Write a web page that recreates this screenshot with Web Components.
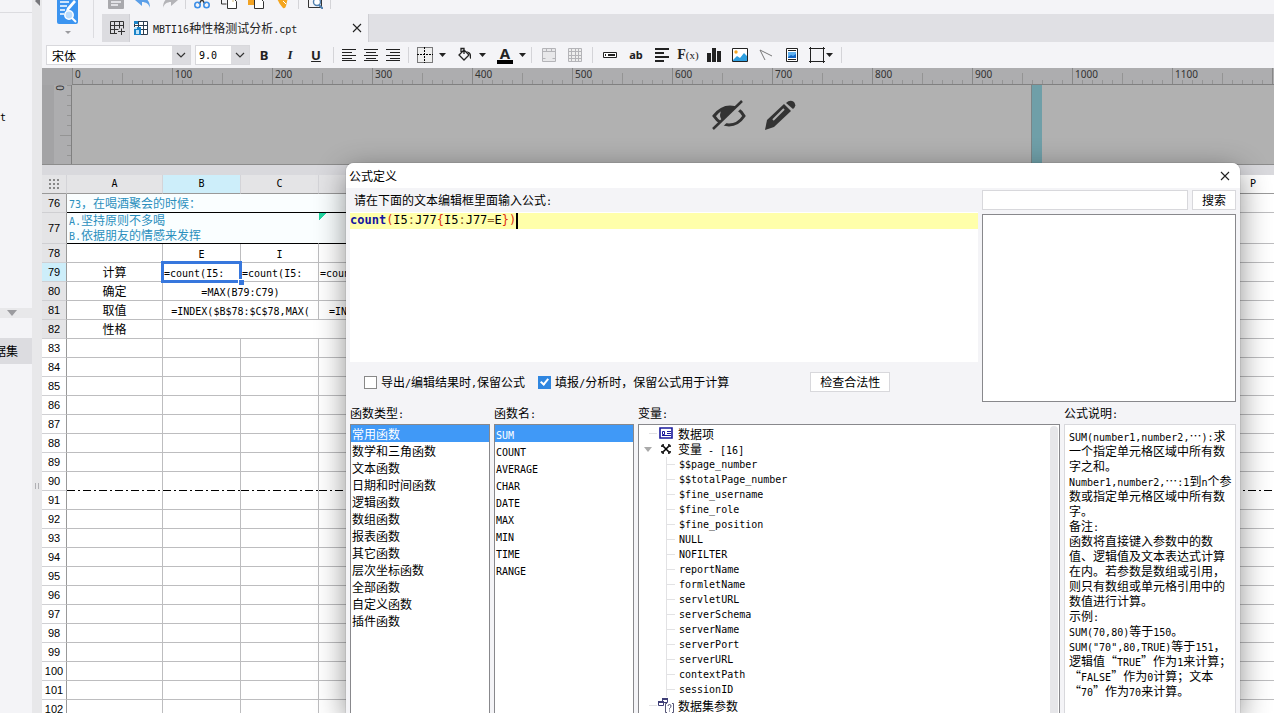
<!DOCTYPE html>
<html lang="zh-CN">
<head>
<meta charset="utf-8">
<title>MBTI16种性格测试分析.cpt</title>
<style>
  body {
    background: #e8e8ea;
    color: #000;
    display: grid;
    font: 12px/15px "Noto Sans CJK SC", "Liberation Sans", sans-serif;
    grid-template-columns: 32px 10px minmax(0, 1fr);
    height: 100vh;
    margin: 0;
    overflow: hidden;
    position: relative;
  }

  main {
    display: flex;
    flex-direction: column;
    min-width: 0;
    overflow: hidden;
  }
</style>
</head>
<body>
  <side-panel></side-panel>
  <pane-splitter></pane-splitter>
  <main>
    <app-header></app-header>
    <format-bar></format-bar>
    <design-canvas></design-canvas>
    <report-sheet></report-sheet>
  </main>
  <formula-dialog heading="公式定义">
    <func-list slot="types" label="函数类型:" items="常用函数|数学和三角函数|文本函数|日期和时间函数|逻辑函数|数组函数|报表函数|其它函数|层次坐标函数|全部函数|自定义函数|插件函数"></func-list>
    <func-list slot="names" label="函数名:" items="SUM|COUNT|AVERAGE|CHAR|DATE|MAX|MIN|TIME|RANGE"></func-list>
    <param-tree slot="params"></param-tree>
    <func-help slot="help"></func-help>
  </formula-dialog>

<script>
// rules every shadow root needs
const base = `
  *, *::before, *::after { box-sizing: border-box; }
  :host([hidden]) { display: none; }
  .l { font-family: "DejaVu Sans Mono", monospace; font-size: 10px; line-height: 12px; }
  button, input, select, textarea { border-radius: 0; color: inherit; font: inherit; margin: 0; padding: 0; }
  svg { display: block; }
`;

// half width runs get the narrow mono face
function mix(str) {
  return str.replace(/[\x20-\x7e]+/g, m => {
    const safe = m.replace(/&/g, '&amp;').replace(/</g, '&lt;');
    return `<span class="l">${safe}</span>`;
  });
}

function render(elem, html) {
  elem.attachShadow({ mode: 'open' }).innerHTML = html;
}

const icons = {
  save: [16, 16, '<path d="M1 0h14q1 0 1 1v14q0 1-1 1H1q-1 0-1-1V0z" fill="#a9a9ad"/><path d="M3 9h10M3 12h7" stroke="#f4f4f7" stroke-width="1.5"/>'],
  undo: [16, 16, '<path d="M0 7l7-6v4c5 0 8 3 8 10-1-4-4-6-8-6v4z" fill="#5b9fe8"/>'],
  redo: [16, 16, '<path d="M16 7L9 1v4c-5 0-8 3-8 10 1-4 4-6 8-6v4z" fill="#b4b4b8"/>'],
  cut: [16, 16, '<path d="M4 0l7 11M12 0L5 11" stroke="#333" stroke-width="1.4"/><circle cx="3.5" cy="12" r="2.7" fill="none" stroke="#3d8fe8" stroke-width="1.6"/><circle cx="12.5" cy="12" r="2.7" fill="none" stroke="#3d8fe8" stroke-width="1.6"/>'],
  copy: [16, 16, '<path d="M.5 0v11h5M0 0h10v4" fill="none" stroke="#333"/><path d="M6.500 5.500h6l3 3v7h-9z" fill="#fff" stroke="#333"/><path d="M7 6h5v3" fill="none" stroke="#d3bd82"/>'],
  paste: [16, 16, '<path d="M0 0h12v12H0z" fill="#f2a324"/><path d="M6.500 5.500h6l3 3v7h-9z" fill="#fff" stroke="#333"/>'],
  brush: [16, 16, '<path d="M1 0h13l-3 13q-1 3-3 2Q2 9 1 0z" fill="#f4a51e"/><path d="M8 8l3 3" stroke="#fff"/>'],
  preview: [16, 16, '<path d="M1.500 0v14.500h13V0M4.500 0v6" fill="none" stroke="#333"/><circle cx="10" cy="9" r="3.500" fill="#fff" stroke="#4f7fae" stroke-width="1.400"/><path d="M12 12l4 4" stroke="#4f7fae" stroke-width="2"/>'],
  tpl: [21, 24, '<path d="M0 0h21v22q0 2-2 2H2q-2 0-2-2z" fill="#3b94f0"/><path d="M3 2h9M3 6h7M3 10h5M3 14h4" stroke="#fff" stroke-width="1.600"/><path d="M17 0l-7 8-1 3 3-1 7-8z" fill="#fff"/><circle cx="12" cy="15" r="4.200" fill="#bcdcfb" stroke="#fff" stroke-width="1.500"/><path d="M15 18l4 4" stroke="#fff" stroke-width="2"/>'],
  newTab: [15, 14, '<path d="M.5 12.500V.5h13v7M.5 4.500h13M4.500.5v12M9.500.5v7M.5 8.500h8M0 12.500h7M11.500 7.500v6.500M8 10.500h7" fill="none" stroke="#333"/>'],
  sheet: [14, 14, '<path d="M.5.5h13v13H.5zM.5 4.500h13M4.500.5v13M9.500.5v13M.5 8.500h13" fill="#fff" stroke="#2d3e50"/><path d="M0 0h4v3H0zM0 6h7v8H0z" fill="#1b84c8"/><path d="M0 6h3v2H0zM2 9h3v4H2z" fill="#bfe3f8"/>'],
  close: [10, 10, '<path d="M1 1l8 8M9 1L1 9" stroke="#222" stroke-width="1.100"/>'],
  left: [14, 12, '<path d="M0 .5h14M0 3.500h10M0 6.500h14M0 9.500h10M0 11.500h14" stroke="#222"/>'],
  center: [14, 12, '<path d="M0 .5h14M2 3.500h10M0 6.500h14M2 9.500h10M0 11.500h14" stroke="#222"/>'],
  right: [14, 12, '<path d="M0 .5h14M4 3.500h10M0 6.500h14M4 9.500h10M0 11.500h14" stroke="#222"/>'],
  border: [16, 16, '<path d="M.5.5h15v15H.5z" fill="#eee" stroke="#000" stroke-dasharray="1 1"/><path d="M0 7.500h16M7.500 0v16" stroke="#000" stroke-dasharray="2 1"/>'],
  bucket: [16, 16, '<path d="M4 5V1.500h3V7M7 3l5 5-5 5-5-5z" fill="none" stroke="#222" stroke-width="1.300"/><path d="M9 4q5 1 5 4v4q-2-1-1-4z" fill="#222"/>'],
  merge: [14, 14, '<path d="M.5.5h13v13H.5z" fill="#e8e8ea" stroke="#b4b4b8"/><path d="M.5 3.500h13M4.500.5v3M9.500.5v3M.5 10.500h3M10.500 10.500h3" stroke="#b4b4b8"/>'],
  grid: [14, 14, '<path d="M.5.5h13v13H.5zM.5 3.500h13M.5 7.500h13M.5 10.500h13M3.500.5v13M7.500.5v13M10.500.5v13" fill="#eee" stroke="#b4b4b8"/>'],
  field: [14, 6, '<path d="M.5.5h13v5H.5z" fill="#fff" stroke="#222"/><path d="M2.500 2v2M5 2.500h7M5 3.500h7" stroke="#222"/>'],
  text: [14, 14, '<path d="M0 1h14M0 5h9M0 9h14M0 13h9" stroke="#222" stroke-width="2"/>'],
  chart: [14, 14, '<path d="M0 5h4v9H0zM5 0h4v14H5zM10 3h4v11h-4z" fill="#222"/>'],
  picture: [16, 14, '<path d="M.5.5h15v13H.5z" fill="#fff" stroke="#222"/><circle cx="4" cy="4" r="1.700" fill="#f5a623"/><path d="M1 12l4-4 3 2 4-5 3 3v5H1z" fill="#2e9fe0"/>'],
  line: [14, 12, '<path d="M1 1l5 10M1 1l12 6" fill="none" stroke="#777"/>'],
  doc: [12, 14, '<path d="M.5.5h11v13H.5z" fill="#fff" stroke="#222"/><path d="M2 2.500h8M2 11.500h8" stroke="#222"/><path d="M2 4h8v6H2z" fill="#5fb1f0"/><path d="M2 9l3-2 2 1 3-2v4H2z" fill="#1266c4"/>'],
  frame: [16, 16, '<path d="M1.500 0v16M14.500 0v16M0 1.500h16M0 14.500h16" fill="none" stroke="#222"/>'],
  caret: [8, 5, '<path d="M0 0h7L3.500 4z" fill="#222"/>'],
  small: [6, 4, '<path d="M0 0h6L3 3z" fill="#9b9b9f"/>'],
  grey: [10, 6, '<path d="M0 0h10L5 6z" fill="#9b9b9f"/>'],
  chevron: [10, 6, '<path d="M1 1l4 4 4-4" fill="none" stroke="#333" stroke-width="1.200"/>'],
  dots: [10, 10, '<path d="M0 1h2M4 1h2M8 1h2M0 5h2M4 5h2M8 5h2M0 9h2M4 9h2M8 9h2" stroke="#888" stroke-width="2"/>'],
  eye: [34, 30, '<path d="M2 16Q9 7 18 7T32 16Q26 25 17 25T2 16z" fill="none" stroke="#333" stroke-width="3"/><path d="M8 15q0-8 9-9 6 0 8 3L13 21q-5-1-5-6z" fill="#333"/><path d="M4 30L33 1" stroke="#b1b1b1" stroke-width="5"/><path d="M1 29L30 1" stroke="#333" stroke-width="2.500"/>'],
  pencil: [32, 30, '<path d="M1 30l2-10L20 4l7 7L10 27z" fill="#333"/><path d="M9 20L20 9" stroke="#b1b1b1" stroke-width="2"/><path d="M22 3q4-4 8-1 3 4-1 7z" fill="#333"/>'],
  data: [14, 12, '<path d="M1 1h12v10H1z" fill="#fff" stroke="#1a1a9c" stroke-width="1.600"/><path d="M3.500 4.500h2v3h-2zM8 4.500h4M8 6.500h4M3 8.500h9" fill="none" stroke="#1a1a9c"/>'],
  vars: [12, 12, '<path d="M2 2l8 8M10 2l-8 8" stroke="#000" stroke-width="1.600"/><path d="M1 4q0-3 3-3v3zM11 4q0-3-3-3v3zM1 8q0 3 3 3V8zM11 8q0 3-3 3V8z" fill="#222"/>'],
  params: [17, 16, '<path d="M4.500 1.500h5v4h-5zM.5 4.500h5v4h-5z" fill="#fff" stroke="#3f3f77"/><path d="M4 2h6M0 5h6" stroke="#3f3f77" stroke-width="2"/><path d="M9 6.500H7.500v9H9M14 6.500h1.500v9H14M10 9q0-1.500 1.500-1.500T13 9t-1.500 2.500v1M11.500 13.500v1" fill="none" stroke="#555577"/>']
};

function icon(name) {
  const [w, h, body] = icons[name];
  return `<svg width="${w}" height="${h}" viewBox="0 0 ${w} ${h}" aria-hidden="true">${body}</svg>`;
}

class SidePanel extends HTMLElement {
  constructor() {
    super();
    render(this, `
    <style>
      ${base}
      :host { background: #f4f4f7; display: flex; flex-direction: column; overflow: hidden; }
      .head { border-bottom: 1px solid #dcdce0; height: 13px; }
      .tree { height: 295px; padding-top: 95px; }
      .fold { align-items: center; background: #e8e8ea; display: flex; height: 10px; padding-left: 7px; }
      .fold button { background: none; border: 0; }
      .set { background: #dcdce0; line-height: 26px; margin-top: 20px; overflow: hidden; display: flex; justify-content: flex-end; padding-right: 14px; white-space: nowrap; }
    </style>
    <div class="head"></div>
    <div class="tree"><span class="l">t</span></div>
    <div class="fold"><button aria-label="折叠">${icon('grey')}</button></div>
    <div class="set">据集</div>`);
  }
}

class PaneSplitter extends HTMLElement {
  constructor() {
    super();
    render(this, `
    <style>
      ${base}
      :host { align-items: center; background: #e8e8ea; display: flex; flex-direction: column; justify-content: space-between; }
      i { border: 5px solid transparent; border-left-width: 0; border-right-color: #77777b; margin-top: -4px; }
      b { border: solid #b0b0b4; border-width: 0 1px; height: 6px; width: 4px; margin-bottom: 224px; }
    </style>
    <i></i><b></b>`);
  }
}

class AppHeader extends HTMLElement {
  constructor() {
    super();
    const btn = (n, label) => `<button aria-label="${label}">${icon(n)}</button>`;
    render(this, `
    <style>
      ${base}
      :host { background: #f4f4f7; display: grid; flex: none; grid-template-columns: 51px 9px minmax(0, 1fr); height: 42px; }
      button { background: none; border: 0; display: grid; place-items: center; }
      .tpl { align-content: start; justify-items: center; gap: 7px; }
      .rule { border-left: 1px solid #dcdce0; height: 38px; }
      .right { display: grid; grid-template-rows: 14px 28px; }
      .tools { align-items: flex-end; display: flex; padding-bottom: 5px; overflow: hidden; }
      .tools button { width: 27px; flex: none; }
      .tools i { border-left: 1px solid #d4d4d8; height: 9px; margin: 0 2px; }
      .tabs { background: #e0e0e4; display: flex; }
      .add { background: #dcdce0; width: 27px; padding-left: 4px; }
      .tab { align-items: center; background: #f4f4f7; border: solid #cfcfd4; border-width: 0 1px; display: flex; gap: 5px; padding: 0 6px 0 4px; width: 240px; }
      .tab span.name { flex: 1; white-space: nowrap; color: #222; }
    </style>
    <button class="tpl" aria-label="模板">${icon('tpl')}${icon('small')}</button>
    <div class="rule"></div>
    <div class="right">
      <div class="tools">
        ${btn('save', '保存')}${btn('undo', '撤销')}${btn('redo', '重做')}<i></i>
        ${btn('cut', '剪切')}${btn('copy', '复制')}${btn('paste', '粘贴')}${btn('brush', '格式刷')}<i></i>
        ${btn('preview', '预览')}<i></i>
      </div>
      <div class="tabs">
        <button class="add" aria-label="新建">${icon('newTab')}</button>
        <div class="tab">${icon('sheet')}<span class="name">${mix('MBTI16种性格测试分析.cpt')}</span>${btn('close', '关闭')}</div>
      </div>
    </div>`);
  }
}

class FormatBar extends HTMLElement {
  constructor() {
    super();
    const btn = (body, label, cls = '') => `<button class="${cls}" aria-label="${label}">${body}</button>`;
    const drop = (body, label) => btn(body + icon('caret'), label, 'drop');
    render(this, `
    <style>
      ${base}
      :host { align-items: center; background: #f4f4f7; display: flex; flex: none; height: 26px; padding-left: 4px; }
      .combo { border: 1px solid #d8d8dc; display: grid; grid-template-columns: minmax(0, 1fr) 18px; height: 20px; margin-right: 4px; width: 145px; }
      .combo.small { margin-right: 1px; width: 55px; }
      .combo select { appearance: none; background: linear-gradient(to left, #dcdce0 18px, #fff 18px); border: 0; grid-area: 1 / 1 / 2 / 3; padding-left: 5px; outline: 0; }
      .combo.small select { font-family: "DejaVu Sans Mono", monospace; font-size: 10px; padding-left: 3px; }
      .combo svg { align-self: center; grid-area: 1 / 2; justify-self: center; pointer-events: none; }
      button { background: none; border: 0; display: flex; align-items: center; justify-content: center; flex: none; width: 26px; height: 22px; color: #222; }
      .al { width: 22px; }
      .drop { gap: 6px; width: 34px; padding-left: 4px; margin-right: 6px; }
      .drop.last { margin-right: 0; }
      .frame { gap: 1px; width: 32px; }
      .txt { font: bold 13px/16px "Noto Sans", sans-serif; }
      .it { font: italic bold 13px/16px "Liberation Serif", serif; }
      .un { text-decoration: underline; }
      .ab { font-size: 11px; }
      .fx { font: bold 14px/16px "Liberation Serif", serif; }
      .fx small { font-size: 11px; font-weight: normal; }
      .color { border-bottom: 4px solid #000; font: bold 15px/13px "Noto Sans", sans-serif; width: 16px; }
      i { border-left: 1px solid #d4d4d8; height: 16px; margin: 0 4px; }
    </style>
    <label class="combo"><select aria-label="字体"><option>宋体</option></select>${icon('chevron')}</label>
    <label class="combo small"><select aria-label="字号"><option>9.0</option></select>${icon('chevron')}</label>
    ${btn('B', '加粗', 'txt')}${btn('I', '斜体', 'it')}${btn('U', '下划线', 'txt un')}<i></i>
    ${btn(icon('left'), '左对齐', 'al')}${btn(icon('center'), '居中', 'al')}${btn(icon('right'), '右对齐', 'al')}<i></i>
    ${drop(icon('border'), '边框')}${drop(icon('bucket'), '填充')}${btn('<span class="color">A</span>' + icon('caret'), '字体颜色', 'drop last')}<i></i>
    ${btn(icon('merge'), '合并')}${btn(icon('grid'), '拆分')}<i></i>
    ${btn(icon('field'), '数据列')}${btn('ab', '文本', 'txt ab')}${btn(icon('text'), '富文本')}
    ${btn('<span>F<small>(x)</small></span>', '公式', 'fx')}${btn(icon('chart'), '图表')}${btn(icon('picture'), '图片')}
    ${btn(icon('line'), '斜线')}${btn(icon('doc'), '子报表')}${btn(icon('frame') + icon('caret'), '悬浮元素', 'frame')}<i></i>`);
  }
}

class DesignCanvas extends HTMLElement {
  constructor() {
    super();
    let marks = '';
    for (let i = 0; i < 12; i++) marks += `<span>${i * 100}</span>`;
    render(this, `
    <style>
      ${base}
      :host { background: #a6a6a8; display: grid; flex: none; grid-template: 17px 79px / 30px minmax(0, 1fr); border-bottom: 1px solid #8c8c8c; }
      .top { background: #adadaf; border-bottom: 1px solid #808080; display: flex; grid-column: 2; overflow: hidden; }
      .top span {
        background:
          linear-gradient(#888, #888) 0 0 / 1px 17px no-repeat,
          linear-gradient(#949494, #949494) 50px 5px / 1px 12px no-repeat,
          linear-gradient(90deg, #949494 1px, transparent 1px) 0 12px / 10px 5px repeat-x;
        color: #333; flex: none; font: 10px/13px "Noto Sans", sans-serif; padding-left: 3px; width: 100px;
      }
      .side {
        background:
          linear-gradient(#949494, #949494) 18px 50px / 12px 1px no-repeat,
          linear-gradient(#949494 1px, transparent 1px) 25px 0 / 5px 10px repeat-y,
          linear-gradient(90deg, #a3a3a5 12px, #adadaf 12px);
        border-right: 1px solid #808080; color: #333;
        font: 10px/12px "Noto Sans", sans-serif; padding-left: 12px; writing-mode: vertical-rl; display: flex; align-items: flex-end;
      }
      .page { background: #b1b1b1; display: grid; grid-template-columns: minmax(0, 1fr) 11px 232px; }
      .icons { align-items: flex-start; display: flex; gap: 18px; padding: 15px 0 0 640px; }
      .icons button { background: none; border: 0; }
      .band { background: #6f9fa8; border-left: 1px solid #7b8587; }
    </style>
    <div></div>
    <div class="top">${marks}<span></span></div>
    <div class="side">0</div>
    <div class="page">
      <div class="icons"><button aria-label="隐藏">${icon('eye')}</button><button aria-label="编辑">${icon('pencil')}</button></div>
      <div class="band"></div>
    </div>`);
  }
}

class ReportSheet extends HTMLElement {
  constructor() {
    super();
    const blank = n => '<td></td>'.repeat(n);
    let rows = '';
    for (let i = 83; i <= 102; i++) {
      rows += `<tr class="${i === 90 ? 'page' : ''}"><th class="free">${i}</th>${blank(14)}</tr>`;
    }
    render(this, `
    <style>
      ${base}
      :host { background: #d9d9dd; display: block; flex: 1; overflow: hidden; padding-top: 10px; }
      table { background: #fff; border-collapse: separate; border-spacing: 0; table-layout: fixed; width: 100%; }
      th, td { border: solid #bdbdbf; border-width: 0 1px 1px 0; height: 19px; line-height: 16px; overflow: hidden; padding: 0; text-align: center; white-space: nowrap; }
      th { background: #e4e4e6; font: 11px/17px "Liberation Sans", sans-serif; border-color: #cfcfd2; border-right-color: #999; }
      thead th { border-right-color: #d4d4d8; border-bottom-color: #999; font: 10px/18px "DejaVu Sans Mono", monospace; height: 19px; }
      td:last-child, thead .free { border-right: 0; }
      .corner svg { margin: 0 auto; }
      .on { background: #cdeefa; }
      .free { background: #fff; }
      .q td { background: #fafeff; border-color: #000; color: #2b8fbd; text-align: left; padding-left: 2px; border-right-color: transparent; }
      .q td:last-child { background: #fff; border-color: #bdbdbf; }
      .two td { height: 30px; line-height: 14px; vertical-align: top; }
      .two td:nth-child(3) { background: linear-gradient(135deg, #1fd6a0 5px, #fafeff 5px); }
      .f { text-align: left; padding-left: 1px; }
      .in { text-align: left; padding-left: 10px; }
      .sel { overflow: visible; position: relative; }
      .sel::before { border: 3px solid #3777dd; content: ''; inset: -2px -2px -2px -2px; position: absolute; }
      .sel::after { background: #3777dd; border: solid #fff; border-width: 1px 0 0 1px; bottom: -4px; content: ''; height: 6px; position: absolute; right: -4px; width: 6px; z-index: 1; }
      .page td {
        border-bottom-color: transparent;
        background: repeating-linear-gradient(90deg, #000 0 8px, #fff 8px 11px, #000 11px 13px, #fff 13px 16px) 0 100% / 100% 1px no-repeat border-box;
      }
    </style>
    <table>
      <colgroup><col style="width:25px"><col style="width:96px"><col style="width:78px"><col style="width:78px"><col span="10"><col style="width:42px"></colgroup>
      <thead><tr><th class="corner">${icon('dots')}</th><th>A</th><th class="on">B</th><th>C</th><th></th>
        ${'<th class="free"></th>'.repeat(9)}<th class="free">P</th></tr></thead>
      <tbody>
        <tr class="q"><th>76</th><td colspan="13">${mix('73')}，在喝酒聚会的时候：</td><td></td></tr>
        <tr class="q two"><th>77</th><td colspan="3">${mix('A.坚持原则不多喝')}<br>${mix('B.依据朋友的情感来发挥')}</td><td colspan="10"></td><td></td></tr>
        <tr><th>78</th><td></td><td>${mix('E')}</td><td>${mix('I')}</td>${blank(11)}</tr>
        <tr><th class="on">79</th><td>计算</td><td class="f sel">${mix('=count(I5:')}</td><td class="f">${mix('=count(I5:')}</td><td class="f">${mix('=count(I5:')}</td>${blank(10)}</tr>
        <tr><th>80</th><td>确定</td><td colspan="2">${mix('=MAX(B79:C79)')}</td>${blank(11)}</tr>
        <tr><th>81</th><td>取值</td><td colspan="2">${mix('=INDEX($B$78:$C$78,MAX(')}</td><td class="in" colspan="2">${mix('=INDEX($D$78:$E$78,MAX(')}</td>${blank(9)}</tr>
        <tr><th>82</th><td>性格</td><td colspan="13"></td></tr>
        ${rows}
      </tbody>
    </table>`);
  }
}

class FormulaDialog extends HTMLElement {
  constructor() {
    super();
    render(this, `
    <style>
      ${base}
      /* window floating over the sheet */
      :host {
        background: #f4f4f7; border-radius: 8px 8px 0 0; bottom: 0; box-shadow: 0 8px 30px rgb(0,0,0,0.45), 0 0 1px rgb(0,0,0,0.6);
        display: flex; flex-direction: column; left: 346px; overflow: hidden; position: absolute; right: 34px; top: 163px;
      }
      header { align-items: center; background: #fff; display: flex; height: 25px; justify-content: space-between; padding: 0 10px 0 3px; }
      h1 { font: inherit; margin: 0; }
      button { background: #fff; border: 1px solid #d8d8dc; height: 20px; line-height: 16px; }
      header button { border: 0; display: grid; place-items: center; }
      .upper { display: grid; gap: 4px; grid-template-columns: minmax(0, 1fr) 254px; padding: 0 4px; }
      .edit { display: flex; flex-direction: column; }
      .edit > label { line-height: 24px; padding-left: 4px; }
      .code { background: #fff; font: 12px/15px "DejaVu Sans Mono", monospace; height: 150px; outline: 0; }
      .line { background: #ffffaa; height: 16px; line-height: 14px; white-space: pre; display: flex; margin-top: 1px; }
      .line b { color: #1414a0; }
      .line i { color: #e03010; font-style: normal; }
      .line u { color: #8a5a20; text-decoration: none; }
      .caret { background: #000; width: 2px; }
      .opts { align-items: center; display: flex; height: 40px; padding-left: 14px; }
      .opts label { align-items: center; display: flex; margin-right: 13px; white-space: nowrap; }
      input[type=checkbox] { appearance: none; background: #fff; border: 1px solid #888; height: 13px; margin-right: 4px; width: 13px; }
      input[type=checkbox]:checked { background: #2f86e0; border-color: #2f86e0; }
      input[type=checkbox]:checked::after { border: solid #fff; border-width: 0 2px 2px 0; content: ''; display: block; height: 8px; margin: 0 0 0 3px; transform: rotate(40deg); width: 5px; }
      .check { margin-left: 68px; width: 80px; }
      .find { display: grid; gap: 4px; grid-template: 20px 188px / minmax(0, 1fr) 44px; padding-top: 2px; }
      .find input { background: #fff; border: 1px solid #d8d8dc; min-width: 0; outline: 0; }
      .hits { background: #fff; border: 1px solid #88888c; grid-column: 1 / 3; }
      .lower { display: grid; flex: 1; gap: 4px; grid-template-columns: 140px 140px minmax(0, 1fr) 172px; min-height: 0; padding: 0 4px; }
      ::slotted(*) { min-width: 0; }
    </style>
    <header><h1>${this.getAttribute('heading')}</h1><button aria-label="关闭">${icon('close')}</button></header>
    <div class="upper">
      <div class="edit">
        <label id="tip">${mix('请在下面的文本编辑框里面输入公式:')}</label>
        <div class="code" role="textbox" contenteditable="true" aria-labelledby="tip" spellcheck="false"><div class="line"><b>count</b><i>(</i>I5<u>:</u>J77<i>{</i>I5<u>:</u>J77<u>=</u>E<i>})</i><span class="caret"></span></div></div>
        <div class="opts">
          <label><input type="checkbox"><span>${mix('导出/编辑结果时,保留公式')}</span></label>
          <label><input type="checkbox" checked><span>${mix('填报/分析时，保留公式用于计算')}</span></label>
          <button class="check">检查合法性</button>
        </div>
      </div>
      <div class="find">
        <input type="text" aria-label="搜索">
        <button>搜索</button>
        <div class="hits"></div>
      </div>
    </div>
    <div class="lower"><slot name="types"></slot><slot name="names"></slot><slot name="params"></slot><slot name="help"></slot></div>`);
  }
}

// titled box shared by the lower row
const boxCss = `
  :host { display: flex; flex-direction: column; }
  .title { line-height: 21px; white-space: nowrap; }
  .box { background: #fff; border: solid #88888c; border-width: 1px 1px 0; flex: 1; margin-top: 1px; overflow: hidden; min-height: 0; }
`;

class FuncList extends HTMLElement {
  constructor() {
    super();
    const items = this.getAttribute('items').split('|');
    render(this, `
    <style>
      ${base}
      ${boxCss}
      ul { list-style: none; margin: 0; padding: 0; }
      li { height: 17px; line-height: 17px; padding-left: 1px; white-space: nowrap; }
      li[aria-selected=true] { background: #4099f7; color: #fff; }
    </style>
    <span class="title" id="t">${mix(this.getAttribute('label'))}</span>
    <div class="box"><ul role="listbox" aria-labelledby="t">
      ${items.map((t, i) => `<li role="option" aria-selected="${i === 0}">${mix(t)}</li>`).join('')}
    </ul></div>`);
    this.shadowRoot.querySelector('ul').addEventListener('click', e => {
      const li = e.target.closest('li');
      if (!li) return;
      this.shadowRoot.querySelectorAll('li').forEach(el => el.setAttribute('aria-selected', el === li));
    });
  }
}

class ParamTree extends HTMLElement {
  constructor() {
    super();
    const vars = ['$$page_number', '$$totalPage_number', '$fine_username', '$fine_role', '$fine_position', 'NULL', 'NOFILTER',
      'reportName', 'formletName', 'servletURL', 'serverSchema', 'serverName', 'serverPort', 'serverURL', 'contextPath', 'sessionID'];
    render(this, `
    <style>
      ${base}
      ${boxCss}
      .box { display: grid; grid-template-columns: minmax(0, 1fr) 10px; }
      .bar { background: #e6e6e9; border-radius: 4px 4px 0 0; margin: 1px 1px 0; }
      ul { list-style: none; margin: 0; padding: 0; }
      .node { align-items: center; display: grid; grid-template-columns: 17px 20px 1fr; height: 16px; justify-items: center; white-space: nowrap; }
      .node > span { justify-self: start; padding-left: 2px; }
      .node i { border-top: 1px solid #e2e2e4; margin-left: 10px; width: 8px; }
      li ul { border-left: 1px solid #e2e2e4; margin-left: 27px; }
      li li { align-items: center; display: flex; gap: 4px; height: 15px; }
      li li::before { border-top: 1px solid #e2e2e4; content: ''; width: 8px; }
    </style>
    <span class="title">${mix('变量:')}</span>
    <div class="box">
      <ul role="tree">
        <li><div class="node"><i></i>${icon('data')}<span>数据项</span></div></li>
        <li><div class="node"><svg width="8" height="5"><path d="M0 0h8L4 5z" fill="#aaa"/></svg>${icon('vars')}<span>变量${mix(' - [16]')}</span></div>
          <ul>${vars.map(v => `<li>${mix(v)}</li>`).join('')}</ul></li>
        <li><div class="node"><i></i>${icon('params')}<span>数据集参数</span></div></li>
      </ul>
      <div class="bar"></div>
    </div>`);
  }
}

class FuncHelp extends HTMLElement {
  constructor() {
    super();
    const lines = ['SUM(number1,number2,…):求', '一个指定单元格区域中所有数', '字之和。', 'Number1,number2,…:1到n个参', '数或指定单元格区域中所有数',
      '字。', '备注:', '函数将直接键入参数中的数', '值、逻辑值及文本表达式计算', '在内。若参数是数组或引用，', '则只有数组或单元格引用中的', '数值进行计算。',
      '示例:', 'SUM(70,80)等于150。', 'SUM("70",80,TRUE)等于151，', '逻辑值“TRUE”作为1来计算；', '“FALSE”作为0计算；文本', '“70”作为70来计算。'];
    render(this, `
    <style>
      ${base}
      ${boxCss}
      .box { border-color: #d8d8dc; padding: 3px 4px 0; }
      p { height: 15px; margin: 0; white-space: nowrap; }
    </style>
    <span class="title">${mix('公式说明:')}</span>
    <div class="box">${lines.map(t => `<p>${mix(t)}</p>`).join('')}</div>`);
  }
}

customElements.define('side-panel', SidePanel);
customElements.define('pane-splitter', PaneSplitter);
customElements.define('app-header', AppHeader);
customElements.define('format-bar', FormatBar);
customElements.define('design-canvas', DesignCanvas);
customElements.define('report-sheet', ReportSheet);
customElements.define('formula-dialog', FormulaDialog);
customElements.define('func-list', FuncList);
customElements.define('param-tree', ParamTree);
customElements.define('func-help', FuncHelp);
</script>
</body>
</html>
